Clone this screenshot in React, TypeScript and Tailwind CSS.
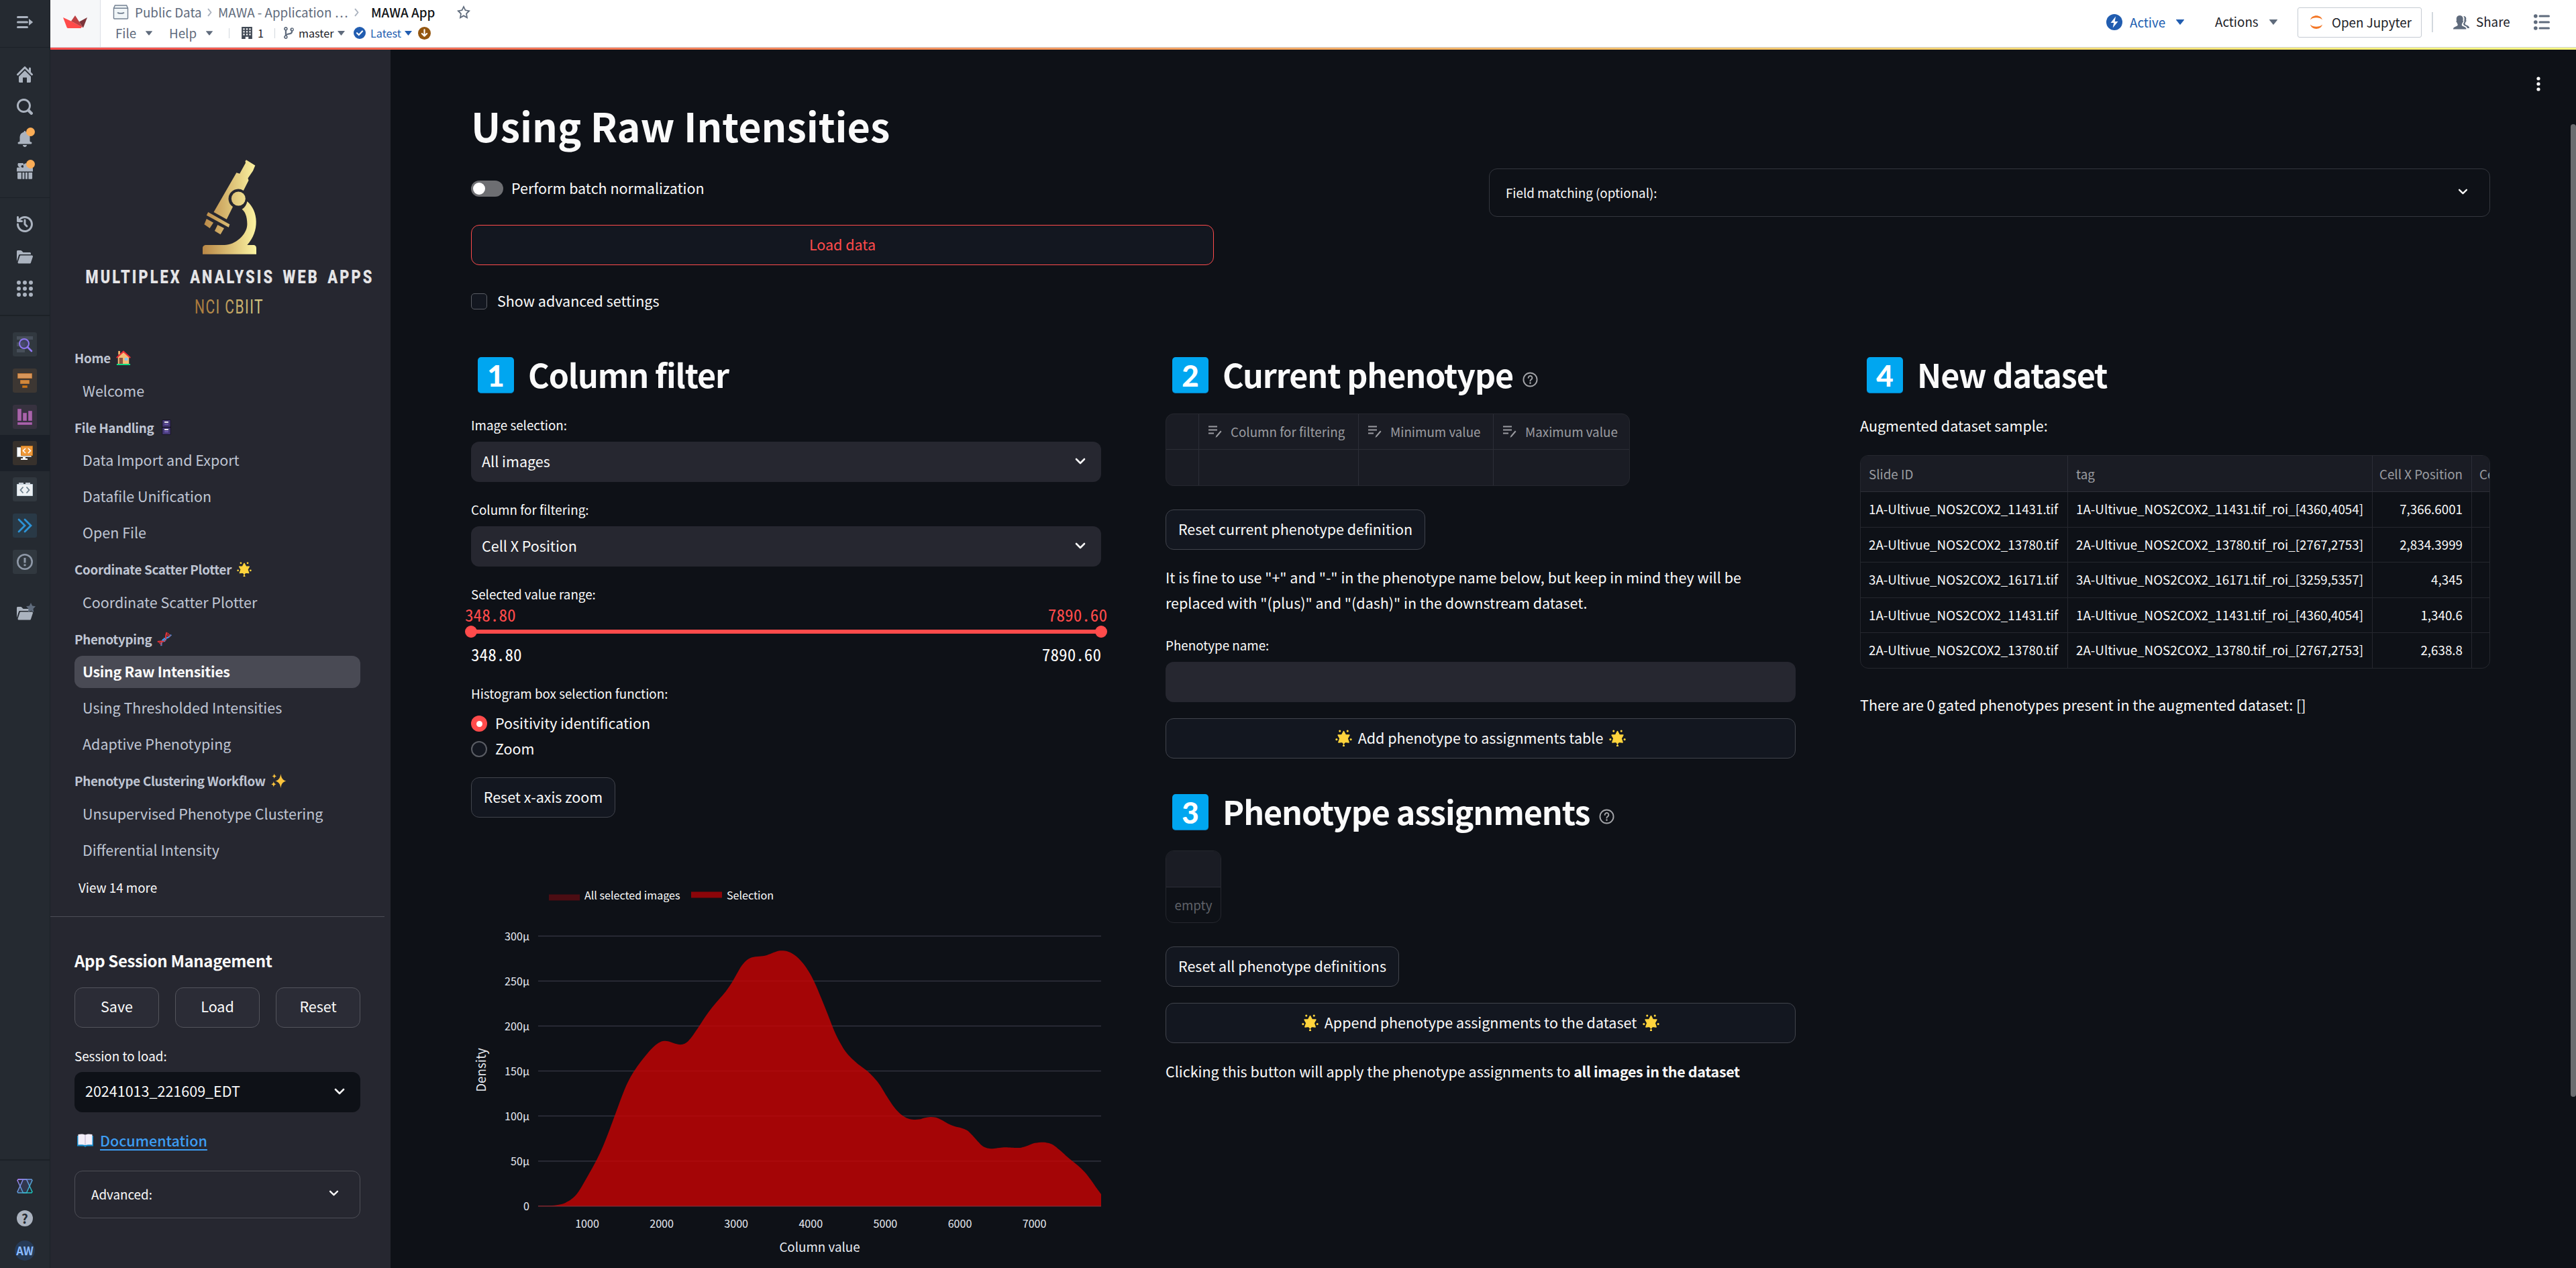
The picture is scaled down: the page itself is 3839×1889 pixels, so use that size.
import React from 'react';

type IconProps = { d: string; className?: string };

const Icon = ({ d, className }: IconProps) => (
  <svg viewBox="0 0 16 16" className={className} fill="currentColor">
    <path fillRule="evenodd" clipRule="evenodd" d={d} />
  </svg>
);

const P = {
  home: 'M2 10v5c0 .55.45 1 1 1h3v-5h4v5h3c.55 0 1-.45 1-1v-5L8 4l-6 6zm13.71-2.71L14 5.59V2c0-.55-.45-1-1-1s-1 .45-1 1v1.59L8.71.29C8.53.11 8.28 0 8 0s-.53.11-.71.29l-7 7a1.003 1.003 0 001.42 1.42L8 2.41l6.29 6.29c.18.19.43.3.71.3a1.003 1.003 0 00.71-1.71z',
  search: 'M15.55 13.43l-2.67-2.68a6.94 6.94 0 001.11-3.76c0-3.87-3.13-7-7-7s-7 3.13-7 7 3.13 7 7 7c1.39 0 2.68-.42 3.76-1.11l2.68 2.67a1.498 1.498 0 102.12-2.12zm-8.56-1.44c-2.76 0-5-2.24-5-5s2.24-5 5-5 5 2.24 5 5-2.24 5-5 5z',
  bell: 'M8 16c1.1 0 2-.9 2-2H6c0 1.1.9 2 2 2zm6-5c-.55 0-1-.45-1-1V6c0-2.43-1.73-4.45-4.02-4.9 0-.04.02-.06.02-.1 0-.55-.45-1-1-1S7 .45 7 1c0 .04.02.06.02.1A4.992 4.992 0 003 6v4c0 .55-.45 1-1 1s-1 .45-1 1 .45 1 1 1h12c.55 0 1-.45 1-1s-.45-1-1-1z',
  gift: 'M4.6 9.4v6.5H1.6c-.5 0-.9-.4-.9-.9V9.400zM5.600 9.400h2v6.500h-2zM8.600 9.400h2v6.500h-2zM11.600 9.400h3.800V15c0 .5-.4.9-.9.9h-2.900zM15 4.400h-3.200a2.900 2.900 0 10-5.500-1.300A2.900 2.900 0 103.300 4.400H1c-.6 0-1 .4-1 1v3h16v-3c0-.6-.4-1-1-1zM5.200 2.100a1.200 1.200 0 110 2.300 1.200 1.200 0 010-2.300z',
  history: 'M8 3c-.55 0-1 .45-1 1v4c0 .28.11.53.29.71l2 2a1.003 1.003 0 001.42-1.42L9 7.59V4c0-.55-.45-1-1-1zm0-3a7.95 7.95 0 00-6 2.74V1c0-.55-.45-1-1-1s-1 .45-1 1v4c0 .55.45 1 1 1h4c.55 0 1-.45 1-1s-.45-1-1-1H3.54C4.64 2.78 6.23 2 8 2c3.31 0 6 2.69 6 6 0 2.61-1.67 4.81-4 5.63-.63.23-1.29.37-2 .37-3.31 0-6-2.69-6-6 0-.55-.45-1-1-1s-1 .45-1 1c0 4.42 3.58 8 8 8 .34 0 .67-.03 1-.07.02 0 .04-.01.06-.01C12.98 15.4 16 12.06 16 8c0-4.42-3.58-8-8-8z',
  folder: 'M2.060 6.690c.14-.4.5-.69.94-.69h11V5c0-.55-.45-1-1-1H6.410l-1.700-1.710A.997.997 0 004 2H1c-.55 0-1 .45-1 1v9.840l2.050-6.150h.010zM16 8c0-.55-.45-1-1-1H4c-.44 0-.81.29-.94.69l-2 6c-.04.09-.06.2-.06.31 0 .55.45 1 1 1h11c.44 0 .81-.29.94-.69l2-6c.04-.09.06-.2.06-.31z',
  starEmpty: 'M16 6.11l-5.53-.84L8 0 5.53 5.27 0 6.11l4 4.1L3.06 16 8 13.27 12.94 16 12 10.21l4-4.1zM4.91 13.2l.59-3.62L3 7.02l3.45-.53L8 3.200l1.550 3.290 3.450.53-2.500 2.560.59 3.620L8 11.490 4.910 13.200z',
  star: 'M16 6.11l-5.53-.84L8 0 5.53 5.27 0 6.11l4 4.1L3.06 16 8 13.27 12.94 16 12 10.21z',
  grid: 'M2 0a2 2 0 110 4 2 2 0 010-4zM8 0a2 2 0 110 4 2 2 0 010-4zM14 0a2 2 0 110 4 2 2 0 010-4zM2 6a2 2 0 110 4 2 2 0 010-4zM8 6a2 2 0 110 4 2 2 0 010-4zM14 6a2 2 0 110 4 2 2 0 010-4zM2 12a2 2 0 110 4 2 2 0 010-4zM8 12a2 2 0 110 4 2 2 0 010-4zM14 12a2 2 0 110 4 2 2 0 010-4z',
  building: 'M1 0h14v16h-5v-3H6v3H1zM3 2v2h2V2zM7 2v2h2V2zM11 2v2h2V2zM3 5.500v2h2v-2zM7 5.500v2h2v-2zM11 5.500v2h2v-2zM3 9v2h2V9zM7 9v2h2V9zM11 9v2h2V9z',
  branch: 'M3.500 0a2.500 2.500 0 011 4.800v4.700c1-.9 2.200-1.200 3.500-1.300 1.800-.1 2.500-.6 2.700-2.400a2.500 2.500 0 112 0c-.2 3-1.800 4.200-4.500 4.400-2 .1-3 .5-3.400 1.200A2.500 2.500 0 112.500 11.200V4.800A2.500 2.500 0 013.500 0zM3.500 1.500a1 1 0 100 2 1 1 0 000-2zM3.500 12.500a1 1 0 100 2 1 1 0 000-2zM12 2.500a1 1 0 100 2 1 1 0 000-2z',
  people: 'M10.800 12.500c-1.700-.7-2.300-1-2.300-2 0-.7.6-1 .9-2.300.3 0 .6-.4.6-1 0-.4-.2-.7-.4-.8.200-.8.300-1.500.1-2.500C9.300 2.200 8.200 1.400 6.500 1.400S3.700 2.200 3.300 3.900c-.2 1-.1 1.700.1 2.500-.2.1-.4.4-.4.8 0 .6.3 1 .6 1 .3 1.300.9 1.600.9 2.300 0 1-.6 1.300-2.300 2C.6 13.200 0 13.600 0 15h13c0-1.400-.6-1.800-2.200-2.500zM13.700 11.200c-1.500-.6-2-1-2-1.700 0-.6.5-.9.8-2 .3 0 .5-.3.5-.8 0-.4-.1-.6-.3-.7.700-2.500-.3-4-2.500-4 .9 1 1.200 2.500.7 4.300.3 1.300-.2 2.300-.8 2.700 0 1.400 0 2 1.300 2.500 1.600.7 2.400 1.200 2.600 2.500h2c0-1.500-.7-2.100-2.300-2.800z',
};

/* ---------- small pieces ---------- */

const Caret = ({ className }: { className: string }) => (
  <svg viewBox="0 0 12 8" className={className} fill="currentColor">
    <path d="M0.400 0h11.200c.4 0 .5.4.3.7L6.500 7.500c-.3.300-.7.300-1 0L.1.700C-.1.400 0 0 .4 0z" />
  </svg>
);

const Chevron = ({ className }: { className: string }) => (
  <svg viewBox="0 0 16 10" className={className} fill="none" stroke="currentColor" strokeWidth="2.600" strokeLinecap="round" strokeLinejoin="round">
    <path d="M2 2l6 6 6-6" />
  </svg>
);

const Crumb = ({ className }: { className: string }) => (
  <svg viewBox="0 0 9 16" className={className} fill="none" stroke="#abb3bf" strokeWidth="2.400" strokeLinecap="round" strokeLinejoin="round">
    <path d="M2 2l5 6-5 6" />
  </svg>
);

const Glow = ({ className }: { className: string }) => (
  <svg viewBox="0 0 24 24" className={className} fill="#ffd43d">
    <path d="M12 2.500l2.600 5 5.400.3-2.700 4.700 1.900 5.600-5.200-.7L12 20l-2-2.600-5.200.7 1.900-5.600L4 7.800l5.400-.3z" strokeLinejoin="round" stroke="#ffd43d" strokeWidth="1.600" />
    <circle cx="6.500" cy="2" r="1.500" />
    <circle cx="17.500" cy="2" r="1.500" />
    <circle cx="1.800" cy="14" r="1.500" />
    <circle cx="22.200" cy="14" r="1.500" />
    <path d="M12 20.300l1.400 2.200a1.500 1.500 0 11-2.800 0z" />
  </svg>
);

const House = () => (
  <svg viewBox="0 0 24 24" className="size-[22px]">
    <path d="M3.500 1h3v6h-3z" fill="#f3b66b" />
    <path d="M3 10.500L12 2l9 8.500V23H3z" fill="#f5bd78" />
    <path d="M5 12h6v10H5z" fill="#8a5340" />
    <path d="M14 12h5v4.500h-5z" fill="#86c7f5" />
    <path d="M1.500 11.500L12 1.800l10.500 9.700" fill="none" stroke="#ee2f37" strokeWidth="2.200" strokeLinecap="round" />
    <path d="M1 21.800h22V24H1z" fill="#10dd83" />
  </svg>
);

const Cabinet = () => (
  <svg viewBox="0 0 14 24" className="ml-[4px] h-[23px] w-[14px]">
    <rect x=".5" y=".5" width="13" height="23" rx="1" fill="#463a78" stroke="#15121f" />
    <path d="M0 12h14" stroke="#15121f" strokeWidth="1.500" />
    <path d="M4 4h6M4 15.500h6" stroke="#fff" strokeWidth="1.800" />
    <path d="M4 7.500h6M4 19h6" stroke="#7c64c0" strokeWidth="1.400" />
  </svg>
);

const Dna = () => (
  <svg viewBox="0 0 24 24" className="size-[22px]" fill="none">
    <path d="M7 23C6.500 17 9 13 13 11.500S19.500 9.500 23 5" stroke="#3f9bf0" strokeWidth="2.400" />
    <path d="M1 16.500c4.500-2 8.500 1 11.500-1.500s.5-8 3.500-14" stroke="#e23237" strokeWidth="2.400" />
    <path d="M3.500 17.500l4 4.500M5.500 16l2.500 3" stroke="#e23237" strokeWidth="1.400" />
    <path d="M15.500 4l4.500 4.500M17 2l5 5" stroke="#e23237" strokeWidth="1.400" />
    <path d="M9 12.500l4 3.500M11 10.500l4 3" stroke="#3f9bf0" strokeWidth="1.400" />
  </svg>
);

const Sparkles = () => (
  <svg viewBox="0 0 24 24" className="size-[23px]" fill="#fcc43d">
    <path d="M15 1c1 6.500 3 9.500 8.500 11C18 13.500 16 16.500 15 23c-1-6.500-3-9.500-8.500-11C12 10.500 14 7.500 15 1z" />
    <path d="M5 .5c.5 2.500 1.200 3.500 3.500 4-2.300.5-3 1.500-3.500 4-.5-2.500-1.200-3.500-3.500-4 2.300-.5 3-1.500 3.500-4z" />
    <path d="M4 12.500c.5 3 1.500 4 4 4.500-2.500.5-3.500 1.500-4 4.500-.5-3-1.500-4-4-4.500 2.500-.5 3.500-1.500 4-4.500z" />
  </svg>
);

const Book = () => (
  <svg viewBox="0 0 24 20" className="h-[20px] w-[24px]">
    <path d="M0 3h24v15.500H14L12 20l-2-1.500H0z" fill="#1288c7" />
    <path d="M1.500 1c4-1 8-.7 10.500.5 2.500-1.200 6.500-1.500 10.500-.5v15.500c-4-.6-8-.4-10.500.5-2.500-.9-6.500-1.100-10.500-.5z" fill="#f3eef9" />
    <path d="M12 1.500V17" stroke="#b8aec9" strokeWidth="1" />
  </svg>
);

const Help = ({ className }: { className: string }) => (
  <svg viewBox="0 0 24 24" className={className} fill="none" stroke="#a3a4a8" strokeWidth="2" strokeLinecap="round">
    <circle cx="12" cy="12" r="10.500" />
    <path d="M9 9.300a3 3 0 115 2.200c-1.200 1-2 1.300-2 2.500" />
    <path d="M12 17.300v.2" strokeWidth="2.600" />
  </svg>
);

const ColumnIcon = () => (
  <svg viewBox="0 0 20 20" className="size-[20px]" fill="none" stroke="#9b9ca1" strokeWidth="1.900">
    <path d="M0 2.500h13M0 7.500h13M0 12.500h8" />
    <path d="M10.500 19l1-3 6.500-7.500 1.500 1.500L13 17.500z" fill="#9b9ca1" stroke="none" />
  </svg>
);

const Heading = ({ n, children, help }: { n: string; children: React.ReactNode; help?: boolean }) => (
  <div className="flex h-[54px] items-center pl-[10px]">
    <span className="flex size-[54px] items-center justify-center rounded-[5px] border-b border-[#0676b5] bg-[#00a6f0] font-['Lato'] text-[44px] leading-[54px] font-black text-white">{n}</span>
    <h2 className="-mt-[5px] ml-[21px] text-[48.400px] leading-[54px] font-semibold tracking-[-1.1px] whitespace-nowrap">{children}</h2>
    {help && <Help className="mt-[13px] ml-[14px] size-[23px]" />}
  </div>
);

const Button = ({ children, className }: { children: React.ReactNode; className: string }) => (
  <button className={`flex h-[60px] items-center justify-center rounded-[12px] border border-[#41444c] bg-[#131720] pb-[2px] text-[21.500px] whitespace-nowrap ${className}`}>{children}</button>
);

const Label = ({ children, className }: { children: React.ReactNode; className: string }) => (
  <div className={`h-[30px] text-[18.800px] leading-[30px] whitespace-nowrap ${className}`}>{children}</div>
);

const Select = ({ children }: { children: React.ReactNode }) => (
  <div className="mt-[10px] flex h-[60px] items-center justify-between rounded-[12px] bg-[#262730] pr-[23px] pb-[2px] pl-[16px] text-[21.500px]">
    <span>{children}</span>
    <Chevron className="h-[10px] w-[16px]" />
  </div>
);

/* ---------- left rail ---------- */

const Tile = ({ bg, active, children }: { bg: string; active?: boolean; children: React.ReactNode }) => (
  <div className={active ? 'flex h-[54px] items-center justify-center bg-[#1b2028]' : 'flex h-[54px] items-center justify-center'}>
    <div className={`flex size-[36px] items-center justify-center rounded-[3px] ${bg}`}>
      <svg viewBox="0 0 24 24" className="size-[24px]">{children}</svg>
    </div>
  </div>
);

const Badge = () => <span className="absolute -top-[5px] left-[14px] size-[13px] rounded-full bg-[#fbad57]" />;

const Rail = () => (
  <nav className="flex h-full w-[75px] shrink-0 flex-col border-r border-[#1c2127] bg-[#252a31] text-[#abb3bf]">
    <div className="flex h-[71px] items-center justify-center border-b border-[#1c2127] pb-[4px]">
      <svg viewBox="0 0 24 18" className="h-[18px] w-[24px]" fill="currentColor">
        <rect y="0" width="17" height="3" rx="1.500" />
        <rect y="7.500" width="17" height="3" rx="1.500" />
        <rect y="15" width="17" height="3" rx="1.500" />
        <path d="M18 4l5.600 4.400a.8.800 0 010 1.200L18 14z" />
      </svg>
    </div>
    <div className="flex h-[224px] flex-col items-center gap-[24px] border-b border-[#1c2127] pt-[28px]">
      <Icon d={P.home} className="size-[24px]" />
      <Icon d={P.search} className="size-[24px]" />
      <div className="relative"><Icon d={P.bell} className="size-[24px]" /><Badge /></div>
      <div className="relative"><Icon d={P.gift} className="size-[24px]" /><Badge /></div>
    </div>
    <div className="flex h-[176px] flex-col items-center gap-[24px] border-b-2 border-[#1c2127] pt-[27px]">
      <Icon d={P.history} className="size-[24px]" />
      <Icon d={P.folder} className="size-[24px]" />
      <Icon d={P.grid} className="size-[24px]" />
    </div>
    <div className="flex flex-col pt-[15px]">
      <Tile bg="bg-[#31383f]">
        <path d="M0 0h24v5H0zM0 9h12v6H0zM0 19h12v5H0z" fill="#474f5a" />
        <circle cx="11" cy="11" r="7" fill="#4a4a78" fillOpacity=".6" stroke="#8f77f0" strokeWidth="2" />
        <path d="M16 16l6 6" stroke="#8f77f0" strokeWidth="2.600" strokeLinecap="round" />
      </Tile>
      <Tile bg="bg-[#3d3733]">
        <path d="M1.500 1.500h21v7h-21z" fill="#d6955a" stroke="#b87333" />
        <path d="M5.500 11.500h13v5h-13z" fill="#d1883c" stroke="#b87333" />
        <path d="M8.500 19.500h7v3h-7z" fill="#c87619" stroke="#a8611a" />
      </Tile>
      <Tile bg="bg-[#37323f]">
        <path d="M1.500.5h5v17h-5zM9.500 6.500h5v11h-5zM17.500 3.500h5v14h-5zM1.500 20.500h21v3h-21z" fill="#a866a8" stroke="#96509b" />
      </Tile>
      <Tile bg="bg-[#37312c]" active>
        <path d="M.5 3.500h21v14H.5z" fill="#fff" stroke="#9aa5ae" />
        <path d="M9 18h4v2h3v2H6v-2h3z" fill="#fff" />
        <path d="M6.500 1.500h17v14h-17z" fill="#ee9a3c" stroke="#c87619" />
        <path d="M13 5l-3.500 3.500L13 12M17 5l3.500 3.500L17 12" stroke="#fff" strokeWidth="1.600" fill="none" />
      </Tile>
      <Tile bg="bg-[#31383f]">
        <path d="M3 2h7v3H3zM13 2h7v3h-7z" fill="#c5cbd3" />
        <path d="M.5 4.500h23v17H.5z" fill="#edf1f4" stroke="#c5d3dc" />
        <path d="M9.500 8.500l-4 4.500 4 4.500M14.500 8.500l4 4.500-4 4.500" stroke="#6b7f8c" strokeWidth="1.800" fill="none" />
      </Tile>
      <Tile bg="bg-[#293946]">
        <path d="M3 3l9 9-9 9M12 3l9 9-9 9" stroke="#2c93d6" strokeWidth="2.800" fill="none" strokeLinecap="round" />
      </Tile>
      <Tile bg="bg-[#31383f]">
        <circle cx="12" cy="12" r="10.700" fill="none" stroke="#8f99a8" strokeWidth="2.600" />
        <path d="M12 6v7.500M12 15.500v2.800" stroke="#8f99a8" strokeWidth="3" />
      </Tile>
    </div>
    <div className="relative mt-[37px] flex justify-center">
      <Icon d={P.folder} className="size-[24px]" />
      <Icon d={P.star} className="absolute -top-[3px] left-[39px] size-[14px] text-[#5f6b7c]" />
    </div>
    <div className="mt-auto flex h-[162px] flex-col items-center border-t-2 border-[#1c2127] pt-[27px]">
      <svg viewBox="0 0 24 22" className="h-[22px] w-[24px]" fill="none" strokeWidth="1.500">
        <defs>
          <linearGradient id="aip" x1="0" y1="0" x2="1" y2="1">
            <stop offset="0" stopColor="#a67bf0" />
            <stop offset=".5" stopColor="#5f9bd8" />
            <stop offset="1" stopColor="#13c9ba" />
          </linearGradient>
        </defs>
        <g stroke="url(#aip)">
          <path d="M2 1h20l1 1.500L14.500 21H2L1 19.500 9.500 1z" fill="#4a4f86" fillOpacity=".35" />
          <path d="M1 2.500L9.500 21H22l1-1.500L14.500 1H2z" />
        </g>
      </svg>
      <span className="mt-[25px] flex size-[24px] items-center justify-center rounded-full bg-[#abb3bf] text-[19px] leading-[24px] font-bold text-[#252a31]">?</span>
      <span className="mt-[21px] flex size-[30px] items-center justify-center rounded-full bg-[#263a55] text-[16.500px] leading-[30px] font-bold text-[#8abbff]">AW</span>
    </div>
  </nav>
);

/* ---------- top bar ---------- */

const TopBar = () => (
  <header className="flex h-[71px] shrink-0 border-b border-[#ced2d9] bg-white text-[#1c2127]">
    <div className="flex w-[75px] shrink-0 justify-center border-r border-[#dce0e5] bg-[#f6f7f9] pt-[23px]">
      <svg viewBox="0 0 36 19" className="h-[19px] w-[36px]">
        <path d="M0 3l12 5.500 16 8.500-1.500 2H7.500c-1 0-1.800-.6-2-1.500z" fill="#ff4b4b" />
        <path d="M18 0l11.500 18L12 8.500z" fill="#bd4043" />
        <path d="M36 3l-6 15.500-6-9z" fill="#7d353b" />
      </svg>
    </div>
    <div className="flex flex-col">
      <div className="flex h-[35px] items-center pt-[1px] pl-[18px] text-[18.800px] leading-[30px] text-[#5f6b7c]">
        <svg viewBox="0 0 24 23" className="h-[22px] w-[24px] shrink-0" fill="#f1f6f8" stroke="#738091" strokeWidth="1.500">
          <path d="M1 5.500h22V21a1 1 0 01-1 1H2a1 1 0 01-1-1zM1 5.500L3 1h18l2 4.500" />
          <path d="M7 12c1 2 9 2 10 0" strokeWidth="2" />
        </svg>
        <span className="ml-[9px] w-[107px] whitespace-nowrap">Public Data</span>
        <Crumb className="h-[13px] w-[9px]" />
        <span className="ml-[8px] w-[202px] whitespace-nowrap">MAWA - Application …</span>
        <Crumb className="h-[13px] w-[9px]" />
        <span className="ml-[17px] w-[128px] font-medium whitespace-nowrap text-[#111418]">MAWA App</span>
        <Icon d={P.starEmpty} className="size-[20px]" />
      </div>
      <div className="flex h-[28px] items-center pl-[22px] text-[18.800px] leading-[28px] text-[#5f6b7c]">
        <span className="w-[45px]">File</span>
        <Caret className="mr-[25px] h-[7px] w-[10px]" />
        <span className="w-[55px]">Help</span>
        <Caret className="mr-[24px] h-[7px] w-[10px]" />
        <span className="mr-[16px] h-[15px] w-px bg-[#d3d8de]" />
        <Icon d={P.building} className="h-[18px] w-[20px] text-[#404854]" />
        <span className="ml-[6px] w-[25px] text-[16.200px] text-[#1c2127]">1</span>
        <span className="mr-[12px] h-[15px] w-px bg-[#d3d8de]" />
        <Icon d={P.branch} className="size-[18px]" />
        <span className="ml-[5px] w-[58px] text-[16.200px] text-[#1c2127]">master</span>
        <Caret className="mr-[13px] h-[7px] w-[11px]" />
        <svg viewBox="0 0 18 18" className="size-[18px]">
          <circle cx="9" cy="9" r="9" fill="#215db0" />
          <path d="M5 9.200l2.800 2.800L13 6.500" fill="none" stroke="#fff" strokeWidth="2.200" strokeLinecap="round" />
        </svg>
        <span className="ml-[7px] w-[51px] text-[16.200px] text-[#215db0]">Latest</span>
        <Caret className="mr-[9px] h-[7px] w-[11px] text-[#215db0]" />
        <svg viewBox="0 0 18 18" className="size-[19px]">
          <circle cx="9" cy="9" r="9" fill="#935610" />
          <path d="M9 4v9M5.500 9.500L9 13l3.500-3.500" fill="none" stroke="#fff" strokeWidth="2" strokeLinecap="round" strokeLinejoin="round" />
        </svg>
      </div>
    </div>
    <div className="ml-auto flex h-[66px] items-center text-[18.800px] leading-[30px]">
      <svg viewBox="0 0 24 24" className="size-[24px]">
        <circle cx="12" cy="12" r="12" fill="#215db0" />
        <path d="M14 3.500L6.500 13h4.700L9.700 20.500 17.500 11h-4.800z" fill="#fff" />
      </svg>
      <span className="ml-[11px] w-[69px] text-[#215db0]">Active</span>
      <Caret className="mr-[46px] h-[8px] w-[12px] text-[#215db0]" />
      <span className="-mt-[2px] w-[81px]">Actions</span>
      <Caret className="mr-[30px] h-[8px] w-[12px] text-[#5f6b7c]" />
      <div className="flex h-[45px] w-[185px] items-center rounded-[3px] border border-[#c5cbd3] pl-[18px]">
        <svg viewBox="0 0 18 20" className="h-[20px] w-[18px]" fill="#f37726">
          <path d="M0 6.500C2-2 16-2 18 6.500c-4-4.300-14-4.300-18 0zM0 13.500c2 8.500 16 8.500 18 0-4 4.300-14 4.300-18 0z" />
        </svg>
        <span className="ml-[14px] whitespace-nowrap">Open Jupyter</span>
      </div>
      <span className="mx-[15px] h-[30px] w-[2px] bg-[#d3d8de]" />
      <Icon d={P.people} className="mr-[10px] ml-[15px] size-[24px] text-[#5f6b7c]" />
      <span className="-mt-[2px] w-[86px]">Share</span>
      <svg viewBox="0 0 24 24" className="mr-[39px] size-[24px]" fill="#5f6b7c">
        <circle cx="2.800" cy="3" r="2.800" />
        <circle cx="2.800" cy="12" r="2.800" />
        <circle cx="2.800" cy="21" r="2.800" />
        <rect x="7.500" y="1.500" width="16.500" height="3" rx="1.500" />
        <rect x="7.500" y="10.500" width="16.500" height="3" rx="1.500" />
        <rect x="7.500" y="19.500" width="16.500" height="3" rx="1.500" />
      </svg>
    </div>
  </header>
);

/* ---------- app sidebar ---------- */

const Logo = () => (
  <svg viewBox="117 234 449 240" className="mt-[160px] ml-[42px] h-[240px] w-[449px]">
    <defs>
      <linearGradient id="gold" gradientUnits="userSpaceOnUse" x1="302" y1="0" x2="382" y2="0">
        <stop offset="0" stopColor="#b98746" />
        <stop offset="1" stopColor="#fcf4a2" />
      </linearGradient>
      <linearGradient id="gold2" gradientUnits="userSpaceOnUse" x1="290" y1="0" x2="391" y2="0">
        <stop offset="0" stopColor="#a97638" />
        <stop offset="1" stopColor="#d9cd86" />
      </linearGradient>
    </defs>
    <g fill="url(#gold)">
      <path d="M367 238.300L380.300 246.500 377 254.500 369.500 265.500 370.500 268.700 362.800 284A14 14 0 00347 308L337.800 326.700 318.500 316 352.400 257.300 357.200 258.700 366 242.700 365.500 240z" />
      <circle cx="355.300" cy="296" r="10.500" />
      <path d="M310.200 316L342.300 334.300 340.800 338.700 307.800 320.700z" />
      <path d="M307.800 326L318 331.700 312.600 340 304.400 334.300zM324.300 335L334 340 328.600 349.300 319.900 344z" />
      <path d="M368.400 300C385 314 387.500 344 368.400 365H377C380.500 365 382 366.500 382 370V378.700H302V370C302 366.500 304 365 307.500 365H334.500C350 365 368.400 350 368.400 334 368.400 322 365 315 360.600 311.700 365 309 367.500 305 368.400 300z" />
    </g>
    <text x="127.500" y="422" textLength="430" lengthAdjust="spacingAndGlyphs" className="font-['Roboto'] text-[28px] font-black" letterSpacing="4" wordSpacing="5" fill="#e4e4e6">MULTIPLEX ANALYSIS WEB APPS</text>
    <text x="290" y="467" textLength="103" lengthAdjust="spacingAndGlyphs" className="font-['Roboto'] text-[29px] font-normal" letterSpacing="2" fill="url(#gold2)">NCI CBIIT</text>
  </svg>
);

const NavGroup = ({ title, icon, items }: { title: string; icon: React.ReactNode; items: string[] }) => (
  <section>
    <div className="flex h-[55.500px] items-center gap-[8px] pt-[5px] text-[18.800px] leading-[28px] font-semibold tracking-[-0.28px] text-[#bfc5d3]">
      <span>{title}</span>
      {icon}
    </div>
    <div className="flex flex-col gap-[6px]">
      {items.map((t) => (
        <div key={t} className={t === 'Using Raw Intensities'
          ? 'h-[48px] rounded-[12px] bg-[#494a54] pl-[12px] text-[21.500px] leading-[45px] font-semibold tracking-[-0.35px] text-[#fafafa]'
          : 'h-[48px] pl-[12px] text-[21.500px] leading-[45px] text-[#bfc5d3]'}>{t}</div>
      ))}
    </div>
  </section>
);

const SideButton = ({ children }: { children: React.ReactNode }) => (
  <button className="flex h-[60px] w-[126px] items-center justify-center rounded-[12px] border border-[#53545c] bg-[#2b2c36] pb-[2px] text-[21.500px]">{children}</button>
);

const SideBar = () => (
  <aside className="w-[507px] shrink-0 overflow-hidden bg-[#262730]">
    <Logo />
    <div className="mt-[29px] mr-[45px] ml-[36px]">
      <NavGroup title="Home" icon={<House />} items={['Welcome']} />
      <NavGroup title="File Handling" icon={<Cabinet />} items={['Data Import and Export', 'Datafile Unification', 'Open File']} />
      <NavGroup title="Coordinate Scatter Plotter" icon={<Glow className="size-[22px]" />} items={['Coordinate Scatter Plotter']} />
      <NavGroup title="Phenotyping" icon={<Dna />} items={['Using Raw Intensities', 'Using Thresholded Intensities', 'Adaptive Phenotyping']} />
      <NavGroup title="Phenotype Clustering Workflow" icon={<Sparkles />} items={['Unsupervised Phenotype Clustering', 'Differential Intensity']} />
    </div>
    <div className="mt-[16px] ml-[42px] h-[30px] text-[18.800px] leading-[30px]">View 14 more</div>
    <hr className="mt-[28px] mr-[9px] border-[#4d4e56]" />
    <div className="mr-[45px] ml-[36px]">
      <h3 className="mt-[48px] h-[34px] text-[24px] leading-[34px] font-semibold tracking-[-0.35px]">App Session Management</h3>
      <div className="mt-[23px] flex justify-between">
        <SideButton>Save</SideButton>
        <SideButton>Load</SideButton>
        <SideButton>Reset</SideButton>
      </div>
      <Label className="mt-[27px]">Session to load:</Label>
      <div className="mt-[9px] flex h-[60px] items-center justify-between rounded-[12px] bg-[#0e1117] pr-[23px] pb-[2px] pl-[16px] text-[21.500px]">
        <span>20241013_221609_EDT</span>
        <Chevron className="h-[10px] w-[16px]" />
      </div>
      <div className="mt-[23px] flex h-[38px] items-center pl-[4px] text-[21.500px] leading-[38px] font-medium">
        <Book />
        <a className="ml-[10px] text-[#3d9df3] underline decoration-2 underline-offset-[4px]">Documentation</a>
      </div>
      <div className="mt-[26px] flex h-[71px] items-center justify-between rounded-[12px] border border-[#4d4e56] pr-[31px] pl-[24px] text-[18.800px] leading-[30px]">
        <span>Advanced:</span>
        <Chevron className="mb-[4px] h-[9px] w-[15px]" />
      </div>
    </div>
  </aside>
);

/* ---------- density chart ---------- */

const curve: [number, number][] = [
  [214, 1338], [240, 1337], [260, 1333], [275, 1326], [290, 1311], [305, 1284], [325, 1228], [345, 1168], [360, 1115], [375, 1052], [390, 985], [400, 940], [410, 898], [420, 864], [430, 836], [445, 801], [460, 770], [475, 744], [488, 729], [500, 725], [512, 729], [525, 736], [537, 738], [548, 730], [560, 708], [575, 672], [590, 634], [605, 600], [620, 571], [635, 542], [650, 506], [660, 477], [672, 444], [685, 422], [698, 413], [715, 410], [728, 406], [742, 397], [755, 390], [768, 390], [780, 396], [795, 412], [810, 438], [822, 467], [835, 507], [850, 565], [865, 627], [880, 690], [893, 733], [905, 765], [918, 789], [930, 807], [945, 826], [958, 843], [970, 864], [983, 891], [995, 924], [1008, 957], [1020, 983], [1032, 1001], [1045, 1013], [1058, 1017], [1070, 1016], [1083, 1010], [1095, 1007], [1108, 1009], [1120, 1018], [1135, 1032], [1150, 1042], [1165, 1048], [1178, 1057], [1190, 1076], [1202, 1098], [1214, 1117], [1226, 1124], [1235, 1125], [1250, 1122], [1265, 1120], [1290, 1122], [1302, 1120], [1315, 1113], [1330, 1104], [1348, 1101], [1360, 1104], [1372, 1112], [1385, 1129], [1400, 1151], [1415, 1172], [1430, 1192], [1445, 1217], [1460, 1250], [1470, 1274], [1479, 1294],
];

const areaPath = () => {
  let d = `M${curve[0][0]} ${curve[0][1]}`;
  for (let i = 0; i < curve.length - 1; i++) {
    const a = curve[Math.max(0, i - 1)];
    const b = curve[i];
    const c = curve[i + 1];
    const e = curve[Math.min(curve.length - 1, i + 2)];
    d += `C${b[0] + (c[0] - a[0]) / 6} ${b[1] + (c[1] - a[1]) / 6} ${c[0] - (e[0] - b[0]) / 6} ${c[1] - (e[1] - b[1]) / 6} ${c[0]} ${c[1]}`;
  }
  return `${d}V1338H214Z`;
};

const yTicks = ['0', '50μ', '100μ', '150μ', '200μ', '250μ', '300μ'];
const xTicks = ['1000', '2000', '3000', '4000', '5000', '6000', '7000'];

const Chart = () => (
  <svg viewBox="702 1218 939 671" className="h-[671px] w-[939px] text-[16.100px]" fill="#e6eaf1">
    <rect x="818" y="1332.500" width="46" height="9" fill="#4c0d13" />
    <text x="871" y="1340" fill="#fafafa">All selected images</text>
    <rect x="1030" y="1328.500" width="46" height="9" fill="#8b0509" />
    <text x="1083" y="1340" fill="#fafafa">Selection</text>
    {yTicks.map((t, i) => (
      <g key={t}>
        <path d={`M802 ${1796.700 - i * 67.050}h839`} stroke="#31333f" strokeWidth="1.500" />
        <text x="789" y={1803 - i * 67.050} textAnchor="end">{t}</text>
      </g>
    ))}
    <svg x="802" y="1394.400" width="839" height="402.300" viewBox="214 335 1265 1003" preserveAspectRatio="none">
      <path d={areaPath()} fill="#cb0303" fillOpacity=".8" />
    </svg>
    <path d="M802 1796.700h839" stroke="#a5222a" strokeOpacity=".6" strokeWidth="1.500" />
    {xTicks.map((t, i) => (
      <text key={t} x={875 + i * 111.100} y="1829" textAnchor="middle">{t}</text>
    ))}
    <text x="1221.500" y="1865" textAnchor="middle" className="text-[18.800px]">Column value</text>
    <text transform="translate(723.500 1594) rotate(-90)" textAnchor="middle" className="text-[18.800px]">Density</text>
  </svg>
);

/* ---------- main columns ---------- */

const mono = "font-['Noto_Sans_Mono_CJK_SC','Liberation_Mono',monospace]";

const ColumnFilter = () => (
  <div className="w-[939px] pt-[71px]">
    <Heading n="1">Column filter</Heading>
    <Label className="mt-[32px]">Image selection:</Label>
    <Select>All images</Select>
    <Label className="mt-[26px]">Column for filtering:</Label>
    <Select>Cell X Position</Select>
    <Label className="mt-[26px]">Selected value range:</Label>
    <div className={`-mx-[9px] flex h-[32px] justify-between text-[25.200px] leading-[30px] text-[#ff4b4b] ${mono}`}>
      <span>348.80</span><span>7890.60</span>
    </div>
    <div className="-mx-[9px] flex h-[18px] items-center">
      <span className="size-[18px] rounded-full bg-[#ff4b4b]" />
      <span className="-mx-[2px] h-[6px] flex-1 bg-[#ff4b4b]" />
      <span className="size-[18px] rounded-full bg-[#ff4b4b]" />
    </div>
    <div className={`mt-[9px] flex h-[30px] justify-between text-[25.200px] leading-[30px] ${mono}`}>
      <span>348.80</span><span>7890.60</span>
    </div>
    <Label className="mt-[29px]">Histogram box selection function:</Label>
    <div className="mt-[18px] flex h-[24px] items-center">
      <span className="flex size-[24px] items-center justify-center rounded-full bg-[#ff4b4b]"><span className="size-[9px] rounded-full bg-white" /></span>
      <span className="-mt-[3px] ml-[12px] text-[21.500px] leading-[24px]">Positivity identification</span>
    </div>
    <div className="mt-[14px] flex h-[24px] items-center">
      <span className="size-[24px] rounded-full border-2 border-[#5a5d64] bg-[#131720]" />
      <span className="-mt-[3px] ml-[12px] text-[21.500px] leading-[24px]">Zoom</span>
    </div>
    <Button className="mt-[30px] w-[215px]">Reset x-axis zoom</Button>
    <Chart />
  </div>
);

const Phenotypes = () => (
  <div className="w-[939px] pt-[71px]">
    <Heading n="2" help>Current phenotype</Heading>
    <div className="mt-[30px] grid h-[108px] w-[692px] grid-cols-[49px_238px_201px_202px] grid-rows-[53px_53px] overflow-hidden rounded-[12px] border border-[#25272e] bg-[#1a1c24] text-[18.800px] leading-[30px] text-[#9b9ca1]">
      <div className="border-r border-b border-[#2c2e37]" />
      {['Column for filtering', 'Minimum value', 'Maximum value'].map((t, i) => (
        <div key={t} className={i < 2 ? 'flex items-center border-r border-b border-[#2c2e37] pl-[14px] whitespace-nowrap' : 'flex items-center border-b border-[#2c2e37] pl-[14px] whitespace-nowrap'}>
          <ColumnIcon />
          <span className="ml-[13px]">{t}</span>
        </div>
      ))}
      <div className="border-r border-[#2c2e37]" />
      <div className="border-r border-[#2c2e37]" />
      <div className="border-r border-[#2c2e37]" />
    </div>
    <Button className="mt-[35px] w-[387px]">Reset current phenotype definition</Button>
    <p className="mt-[22px] h-[77px] text-[21.500px] leading-[38.400px]">
      It is fine to use "+" and "-" in the phenotype name below, but keep in mind they will be<br />replaced with "(plus)" and "(dash)" in the downstream dataset.
    </p>
    <Label className="mt-[28px]">Phenotype name:</Label>
    <div className="mt-[10px] h-[60px] rounded-[12px] bg-[#262730]" />
    <Button className="mt-[24px] w-full gap-[9px]"><Glow className="size-[25px]" />Add phenotype to assignments table<Glow className="size-[25px]" /></Button>
    <div className="h-[53px]" />
    <Heading n="3" help>Phenotype assignments</Heading>
    <div className="mt-[30px] h-[108px] w-[83px] overflow-hidden rounded-[12px] border border-[#25272e]">
      <div className="h-[54px] border-b border-[#2c2e37] bg-[#1a1c24]" />
      <div className="text-center text-[18.800px] leading-[52px] text-[#5f6168]">empty</div>
    </div>
    <Button className="mt-[35px] w-[348px]">Reset all phenotype definitions</Button>
    <Button className="mt-[24px] w-full gap-[9px]"><Glow className="size-[25px]" />Append phenotype assignments to the dataset<Glow className="size-[25px]" /></Button>
    <p className="mt-[23px] text-[21.500px] leading-[38px] whitespace-nowrap">Clicking this button will apply the phenotype assignments to <b className="font-semibold tracking-[-0.35px]">all images in the dataset</b></p>
  </div>
);

const rows = [
  ['1A-Ultivue_NOS2COX2_11431.tif', '1A-Ultivue_NOS2COX2_11431.tif_roi_[4360,4054]', '7,366.6001'],
  ['2A-Ultivue_NOS2COX2_13780.tif', '2A-Ultivue_NOS2COX2_13780.tif_roi_[2767,2753]', '2,834.3999'],
  ['3A-Ultivue_NOS2COX2_16171.tif', '3A-Ultivue_NOS2COX2_16171.tif_roi_[3259,5357]', '4,345'],
  ['1A-Ultivue_NOS2COX2_11431.tif', '1A-Ultivue_NOS2COX2_11431.tif_roi_[4360,4054]', '1,340.6'],
  ['2A-Ultivue_NOS2COX2_13780.tif', '2A-Ultivue_NOS2COX2_13780.tif_roi_[2767,2753]', '2,638.8'],
];

const NewDataset = () => (
  <div className="w-[939px] pt-[71px]">
    <Heading n="4">New dataset</Heading>
    <p className="mt-[29px] text-[21.500px] leading-[38px]">Augmented dataset sample:</p>
    <div className="mt-[25px] h-[318px] overflow-hidden rounded-[12px] border border-[#25272e] text-[18.800px]">
      <div className="grid h-[54px] grid-cols-[309px_454px_148px_26px] border-b border-[#2c2e37] bg-[#1a1c24] leading-[53px] whitespace-nowrap text-[#9b9ca1]">
        <span className="border-r border-[#2c2e37] pl-[12px]">Slide ID</span>
        <span className="border-r border-[#2c2e37] pl-[12px]">tag</span>
        <span className="border-r border-[#2c2e37] pr-[13px] text-right">Cell X Position</span>
        <span className="overflow-hidden pl-[11px]">Cell Y Position</span>
      </div>
      {rows.map((r, i) => (
        <div key={i} className="grid h-[52.600px] grid-cols-[309px_454px_148px_26px] border-b border-[#25272e] leading-[50px] whitespace-nowrap">
          <span className="border-r border-[#25272e] pl-[12px]">{r[0]}</span>
          <span className="border-r border-[#25272e] pl-[12px]">{r[1]}</span>
          <span className="border-r border-[#25272e] pr-[13px] text-right">{r[2]}</span>
        </div>
      ))}
    </div>
    <p className="mt-[35px] text-[21.500px] leading-[38px]">There are 0 gated phenotypes present in the augmented dataset: []</p>
  </div>
);

const Main = () => (
  <main className="relative min-w-0 flex-1 overflow-hidden bg-[#0e1117] pt-[72px] pl-[120px]">
    <h1 className="h-[80px] text-[59.150px] leading-[80px] font-bold whitespace-nowrap">Using Raw Intensities</h1>
    <div className="flex h-[235px] w-[3009px] justify-between">
      <div className="w-[1107px] pt-[43px]">
        <div className="flex h-[24px] items-center">
          <span className="flex h-[24px] w-[48px] items-center rounded-full bg-[#6d6e72] pl-[3px]"><span className="size-[18px] rounded-full bg-white" /></span>
          <span className="-mt-[3px] ml-[12px] text-[21.500px] leading-[24px]">Perform batch normalization</span>
        </div>
        <button className="mt-[42px] flex h-[60px] w-full items-center justify-center rounded-[12px] border border-[#ff4b4b] bg-[#131720] pb-[2px] text-[21.500px] text-[#ff4b4b]">Load data</button>
        <div className="mt-[42px] flex h-[24px] items-center">
          <span className="size-[24px] rounded-[5px] border-[1.500px] border-[#5a5d64] bg-[#131720]" />
          <span className="-mt-[3px] ml-[15px] text-[21.500px] leading-[24px]">Show advanced settings</span>
        </div>
      </div>
      <div className="mt-[25px] flex h-[72px] w-[1492px] items-center justify-between rounded-[12px] border border-[#34373e] pr-[32px] pl-[24px] text-[18.800px] leading-[30px]">
        <span>Field matching (optional):</span>
        <Chevron className="mb-[4px] h-[9px] w-[15px]" />
      </div>
    </div>
    <div className="flex gap-[96px]">
      <ColumnFilter />
      <Phenotypes />
      <NewDataset />
    </div>
    <svg viewBox="0 0 6 22" className="absolute top-[40px] right-[53px] h-[22px] w-[6px]" fill="#fafafa">
      <circle cx="3" cy="3" r="2.600" />
      <circle cx="3" cy="11" r="2.600" />
      <circle cx="3" cy="19" r="2.600" />
    </svg>
    <div className="absolute top-[111px] right-0 h-[1449px] w-[8px] rounded-[4px] bg-[#6b6c70]" />
  </main>
);

export default function App() {
  return (
    <div className="flex h-[1889px] w-[3839px] overflow-hidden bg-[#0e1117] font-['Noto_Sans_CJK_SC','Noto_Sans',sans-serif] text-[#fafafa]">
      <Rail />
      <div className="flex min-w-0 flex-1 flex-col">
        <TopBar />
        <div className="h-[3px] shrink-0 bg-linear-to-r from-[#ff4b4b] to-[#fffd80]" />
        <div className="flex min-h-0 flex-1">
          <SideBar />
          <Main />
        </div>
      </div>
    </div>
  );
}
